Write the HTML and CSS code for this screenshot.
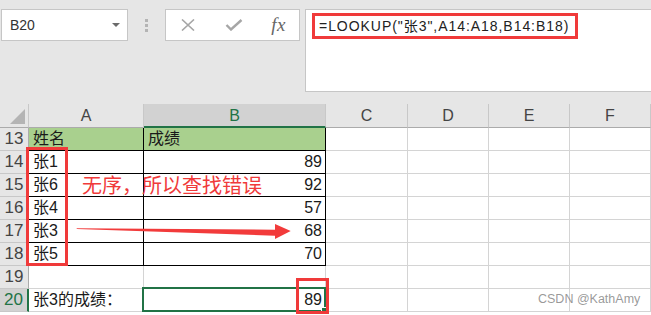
FILE: index.html
```html
<!DOCTYPE html>
<html lang="zh-CN">
<head>
  <meta charset="UTF-8">
  <title>LOOKUP 无序查找</title>
  <link rel="stylesheet" href="styles.css">
</head>
<body>
  <!-- Name box + formula bar -->
  <div class="toolbar">
    <div class="namebox"><span>B20</span><span class="caret"></span></div>
    <div class="grip"><i></i><i></i><i></i></div>
    <div class="fxbtns">
      <svg width="16" height="12" viewBox="0 0 16 12"><path d="M2 0.5 L14 11.5 M14 0.5 L2 11.5" stroke="#a6a6a6" stroke-width="1.6" fill="none"/></svg>
      <svg width="18" height="12" viewBox="0 0 18 12"><path d="M1.5 6 L6 10.5 L16.5 1" stroke="#a6a6a6" stroke-width="2.4" fill="none"/></svg>
      <span class="fx">fx</span>
    </div>
    <div class="formula"><span class="formula-text">=LOOKUP("张3",A14:A18,B14:B18)</span></div>
  </div>

  <!-- Sheet -->
  <div class="sheet">
    <div class="grid">
      <div class="ch corner"><span class="tri"></span></div>
      <div class="ch">A</div>
      <div class="ch sel">B</div>
      <div class="ch">C</div>
      <div class="ch">D</div>
      <div class="ch">E</div>
      <div class="ch">F</div>

      <div class="rh">13</div>
      <div class="c head bb br">姓名</div>
      <div class="c head bb br">成绩</div>
      <div class="c"></div><div class="c"></div><div class="c"></div><div class="c"></div>

      <div class="rh">14</div>
      <div class="c bb br">张1</div>
      <div class="c bb br num">89</div>
      <div class="c"></div><div class="c"></div><div class="c"></div><div class="c"></div>

      <div class="rh">15</div>
      <div class="c bb br">张6</div>
      <div class="c bb br num">92</div>
      <div class="c"></div><div class="c"></div><div class="c"></div><div class="c"></div>

      <div class="rh">16</div>
      <div class="c bb br">张4</div>
      <div class="c bb br num">57</div>
      <div class="c"></div><div class="c"></div><div class="c"></div><div class="c"></div>

      <div class="rh">17</div>
      <div class="c bb br">张3</div>
      <div class="c bb br num">68</div>
      <div class="c"></div><div class="c"></div><div class="c"></div><div class="c"></div>

      <div class="rh">18</div>
      <div class="c bb br">张5</div>
      <div class="c bb br num">70</div>
      <div class="c"></div><div class="c"></div><div class="c"></div><div class="c"></div>

      <div class="rh">19</div>
      <div class="c"></div><div class="c"></div>
      <div class="c"></div><div class="c"></div><div class="c"></div><div class="c"></div>

      <div class="rh sel">20</div>
      <div class="c">张3的成绩：</div>
      <div class="c num active">89</div>
      <div class="c"></div><div class="c"></div><div class="c"></div><div class="c"></div>
    </div>

    <!-- annotations -->
    <div class="mark names"></div>
    <div class="mark result"></div>
    <div class="note">无序，所以查找错误</div>
    <svg class="arrow" width="230" height="24" viewBox="0 0 230 24">
      <polygon points="6.7,9.2 205,10.7 205,5 220.7,12 205,20 205,16.7 6.7,9.9" fill="#f23b3b"/>
    </svg>
    <div class="watermark">CSDN @KathAmy</div>
  </div>
</body>
</html>
```

FILE: styles.css
```css
body {
  margin: 0;
  width: 651px;
  height: 315px;
  overflow: hidden;
  background: #ffffff;
  font-family: 'Liberation Sans', 'Noto Sans CJK SC', sans-serif;
  color: #222;
}
.toolbar {
  height: 104px;
  box-sizing: border-box;
  background: #e6e6e6;
  padding: 9px 0 0 1px;
  display: flex;
  align-items: flex-start;
}
.namebox {
  width: 127px;
  height: 32px;
  box-sizing: border-box;
  background: #fff;
  border: 1px solid #c6c6c6;
  display: flex;
  align-items: center;
  justify-content: space-between;
  padding: 0 7px 0 8px;
  font-size: 14px;
  color: #333;
}
.caret {
  width: 0;
  height: 0;
  border-left: 4px solid transparent;
  border-right: 4px solid transparent;
  border-top: 4px solid #6b6b6b;
}
.grip {
  width: 37px;
  height: 32px;
  display: flex;
  flex-direction: column;
  align-items: center;
  justify-content: center;
  gap: 2px;
}
.grip i {
  width: 3px;
  height: 3px;
  background: #b4b4b4;
}
.fxbtns {
  width: 135px;
  height: 32px;
  box-sizing: border-box;
  background: #fff;
  border: 1px solid #c6c6c6;
  display: flex;
  align-items: center;
  justify-content: space-between;
  padding: 0 13px 0 14px;
}
.fx {
  font-family: 'Liberation Serif', 'DejaVu Serif', serif;
  font-style: italic;
  font-size: 19px;
  color: #666;
  letter-spacing: 0.5px;
}
.formula {
  margin-left: 5px;
  flex: 1;
  height: 83px;
  box-sizing: border-box;
  background: #fff;
  border: 1px solid #c6c6c6;
  border-right: none;
}
.formula-text {
  display: inline-block;
  margin: 3px 0 0 6px;
  padding: 0 6px 0 4px;
  height: 26px;
  line-height: 21px;
  box-sizing: border-box;
  border: 3px solid #f03a3a;
  font-size: 14px;
  letter-spacing: 0.95px;
  color: #222;
}

.sheet {
  position: relative;
}
.grid {
  display: grid;
  grid-template-columns: 29px 115px 182px 82px 81px 81px 81px;
  grid-template-rows: 24px repeat(8, 23px) 4px;
}
.grid > div {
  box-sizing: border-box;
  border-right: 1px solid #d4d4d4;
  border-bottom: 1px solid #d4d4d4;
}
.ch {
  background: #e6e6e6;
  text-align: center;
  font-size: 16px;
  line-height: 23px;
  color: #444;
  border-right-color: #c8c8c8 !important;
  border-bottom-color: #ababab !important;
}
.ch.sel {
  background: #d2d2d2;
  color: #217346;
  border-bottom: 2px solid #217346 !important;
}
.corner {
  position: relative;
}
.tri {
  position: absolute;
  right: 3px;
  bottom: 3px;
  width: 0;
  height: 0;
  border-left: 15px solid transparent;
  border-bottom: 15px solid #b4b4b4;
}
.rh {
  background: #e6e6e6;
  text-align: center;
  font-size: 17px;
  line-height: 22px;
  color: #444;
  border-right-color: #ababab !important;
  border-bottom-color: #c8c8c8 !important;
}
.rh.sel {
  background: #d2d2d2;
  color: #217346;
  border-right: 2px solid #217346 !important;
}
.c {
  font-size: 16px;
  line-height: 22px;
  padding: 0 3px 0 4px;
  white-space: nowrap;
  color: #1a1a1a;
}
.c.num {
  text-align: right;
}
.c.head {
  background: #a9d08e;
}
.grid > .bb {
  border-bottom-color: #000;
}
.grid > .br {
  border-right-color: #000;
}
.c.active {
  position: relative;
}
.c.active::after {
  content: "";
  position: absolute;
  left: -2px;
  top: -2px;
  right: -1px;
  bottom: -1px;
  border: 2px solid #217346;
}
.c.active::before {
  content: "";
  position: absolute;
  right: -3px;
  bottom: -3px;
  width: 5px;
  height: 5px;
  background: #217346;
  border: 1px solid #fff;
  z-index: 1;
}

.mark {
  position: absolute;
  box-sizing: border-box;
  border: 3px solid #f03a3a;
}
.mark.names {
  left: 26px;
  top: 43px;
  width: 42px;
  height: 119px;
}
.mark.result {
  left: 296px;
  top: 174px;
  width: 33px;
  height: 36px;
  z-index: 2;
}
.note {
  position: absolute;
  left: 82px;
  top: 70px;
  font-family: 'Noto Sans CJK SC', sans-serif;
  font-size: 20px;
  line-height: 22px;
  color: #f03a3a;
  white-space: nowrap;
}
.arrow {
  position: absolute;
  left: 70px;
  top: 115px;
}
.watermark {
  position: absolute;
  left: 538px;
  top: 187px;
  font-size: 12.5px;
  line-height: 16px;
  white-space: nowrap;
  color: rgba(120, 120, 120, 0.75);
}
```
